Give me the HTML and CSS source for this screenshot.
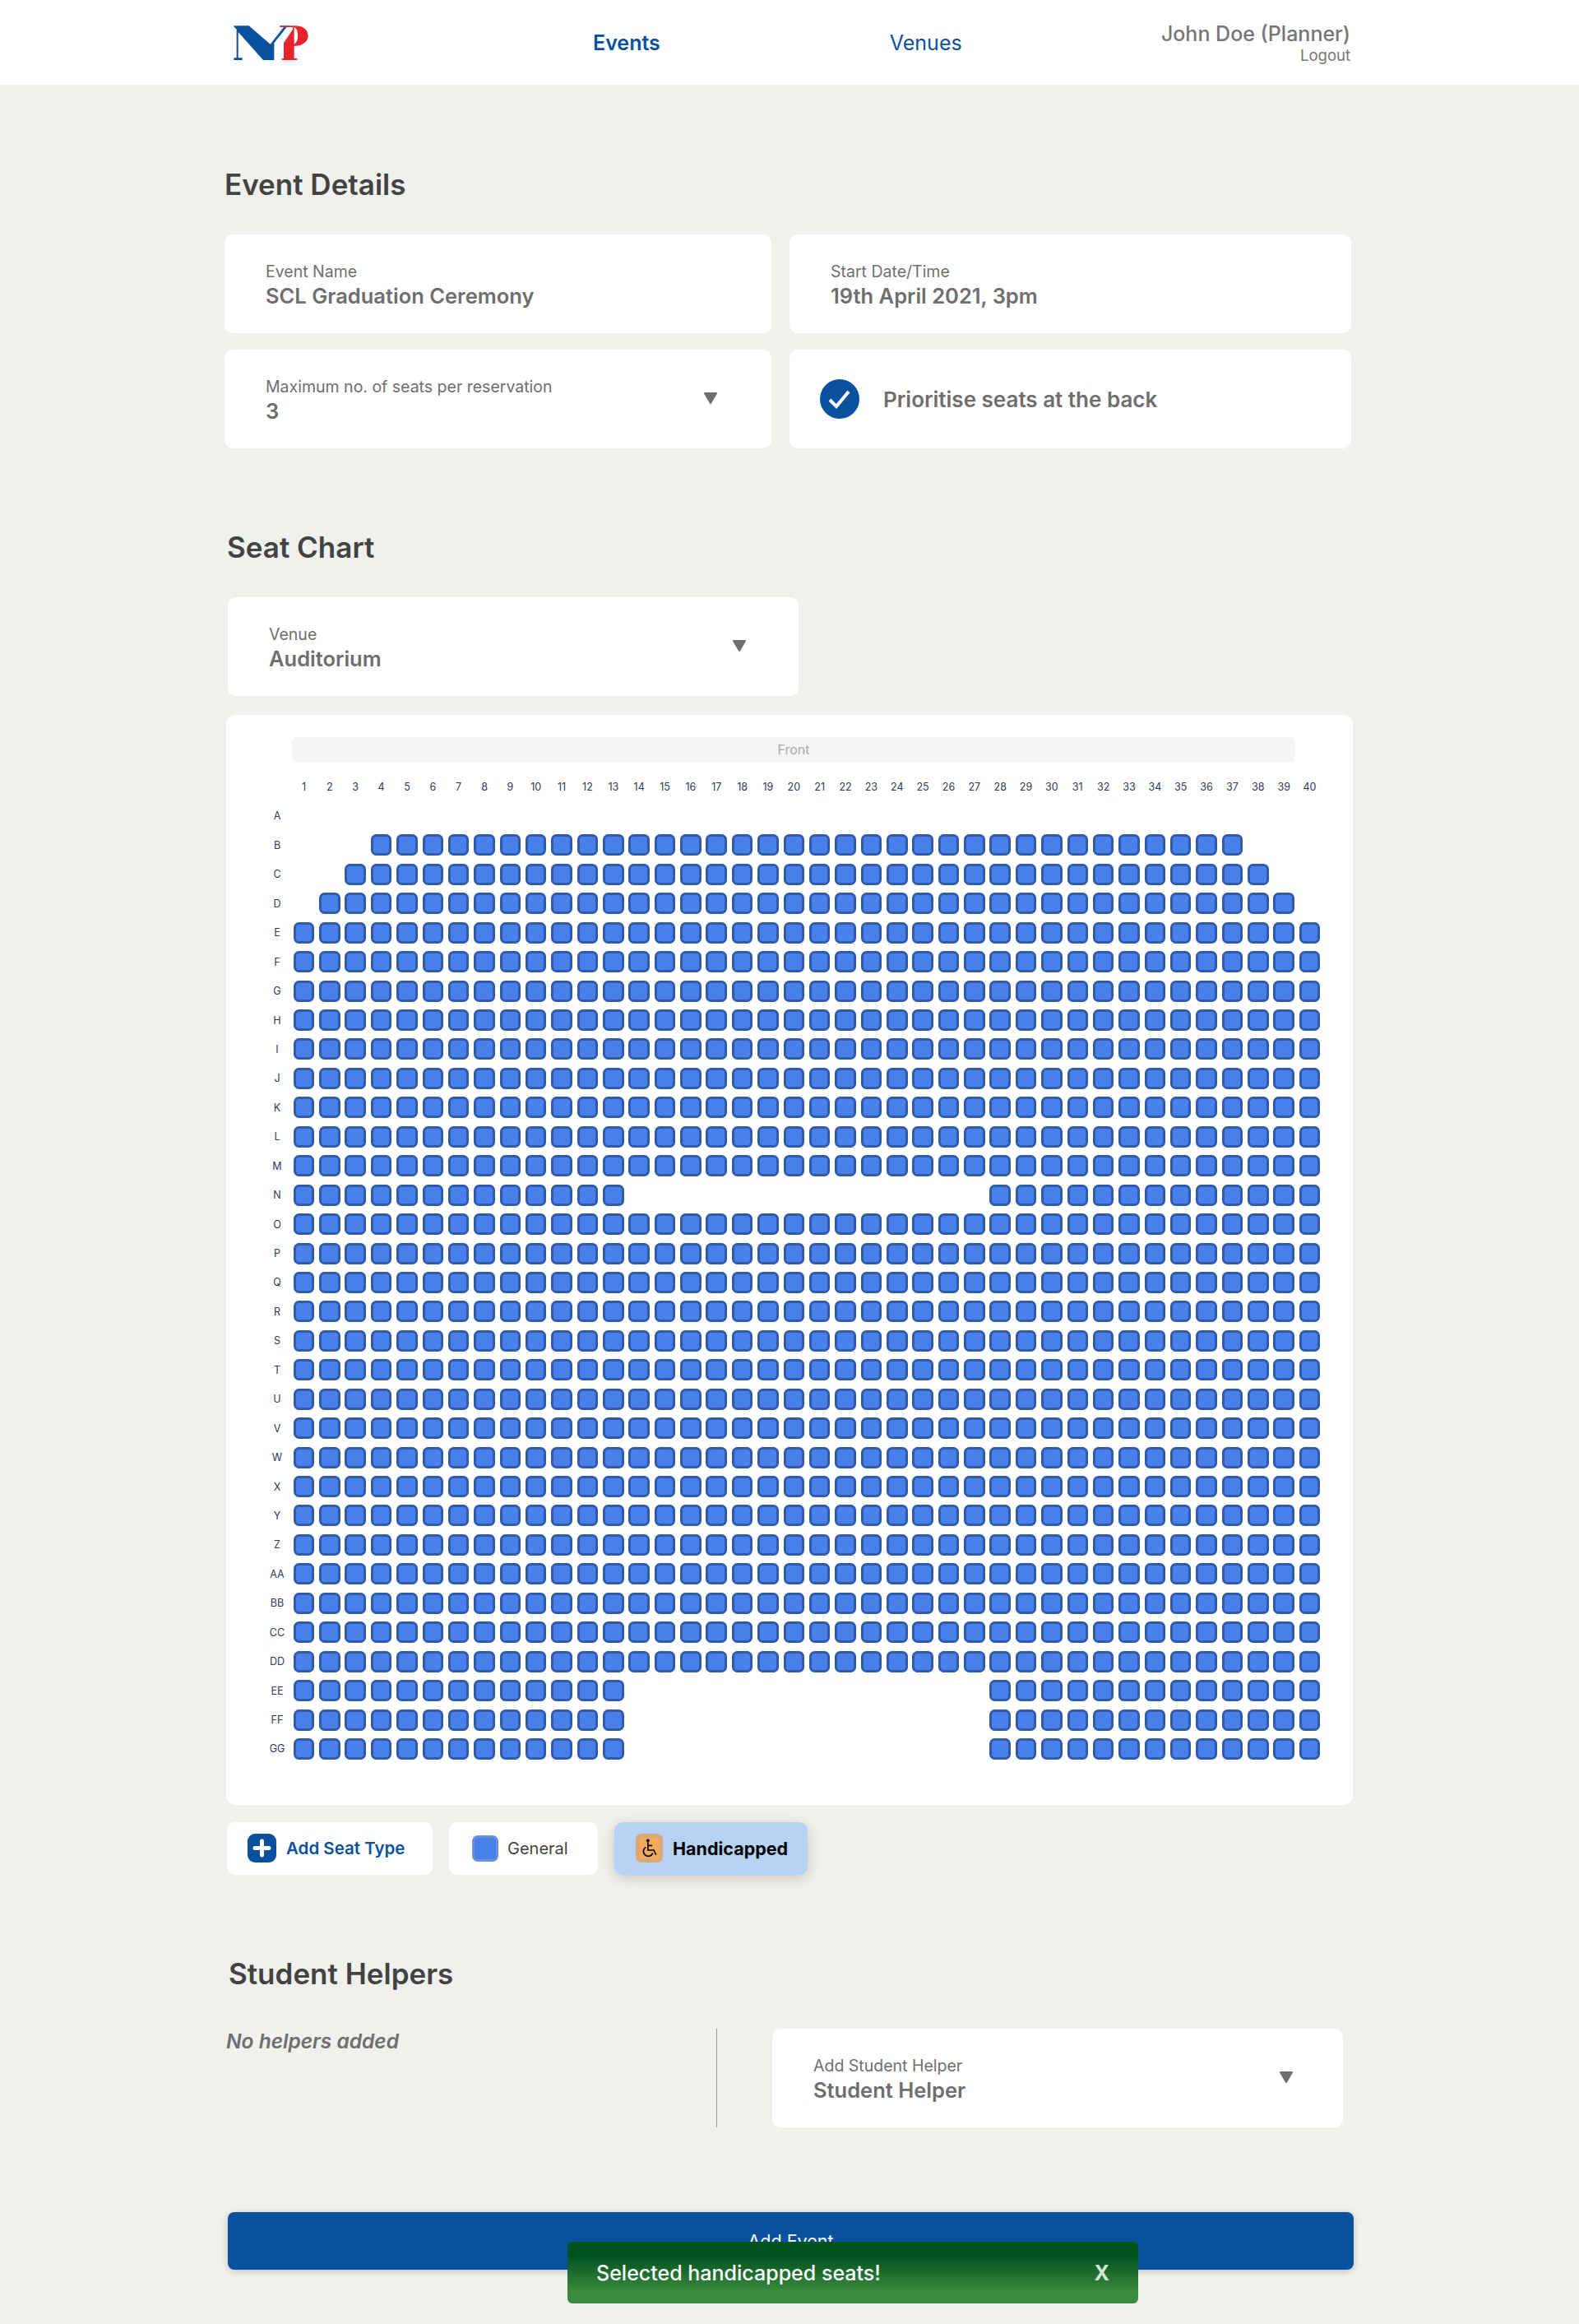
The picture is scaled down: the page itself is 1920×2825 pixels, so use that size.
FILE: index.html
```html
<!DOCTYPE html>
<html lang="en">
<head>
  <meta charset="UTF-8" />
  <meta name="viewport" content="width=device-width, initial-scale=1" />
  <title>Add Event</title>
  <link rel="stylesheet" href="styles.css">
</head>
<body>

<header class="topbar">
  <svg class="logo" viewBox="0 0 324 174" aria-label="NYP">
    <path fill="#09509e" d="M25 25H80L158 92L207 30H193V25H228V30H218L172 88V150H132L41 48V142H56V150H25V142H35V38L25 28Z" />
    <path fill="#e8232b" fill-rule="evenodd" d="M195 25H250C280 25 296 42 296 62C296 84 272 100 245 98V144H256V150H200V144H207V88L240 38V30H195ZM245 30C262 34 264 84 245 92Z" />
  </svg>
  <a class="nav-link events">Events</a>
  <a class="nav-link venues">Venues</a>
  <div class="user">
    <div class="user-name">John Doe (Planner)</div>
    <div class="user-logout">Logout</div>
  </div>
</header>

<main>
  <section class="details">
    <h2>Event Details</h2>
    <div class="details-grid">
      <div class="field">
        <div class="field-label">Event Name</div>
        <div class="field-value">SCL Graduation Ceremony</div>
      </div>
      <div class="field">
        <div class="field-label">Start Date/Time</div>
        <div class="field-value">19th April 2021, 3pm</div>
      </div>
      <div class="field select select-seats">
        <div>
          <div class="field-label">Maximum no. of seats per reservation</div>
          <div class="field-value">3</div>
        </div>
        <svg class="arrow" viewBox="0 0 18 16"><path d="M2 2H16L9 14Z" /></svg>
      </div>
      <div class="field check-field">
        <svg class="check" viewBox="0 0 48 48">
          <circle cx="24" cy="24" r="24" fill="#09509e" />
          <path d="M12 25L20 33L35 15" fill="none" stroke="#fff" stroke-width="4" />
        </svg>
        <span class="check-text">Prioritise seats at the back</span>
      </div>
    </div>
  </section>

  <section class="seat-chart">
    <h2>Seat Chart</h2>
    <div class="field select venue">
      <div>
        <div class="field-label">Venue</div>
        <div class="field-value">Auditorium</div>
      </div>
      <svg class="arrow" viewBox="0 0 18 16"><path d="M2 2H16L9 14Z" /></svg>
    </div>

    <div class="chart">
      <div class="front">Front</div>
      <div class="seat-grid" id="seatGrid"></div>
    </div>

    <div class="seat-types">
      <div class="chip chip-add">
        <svg class="plus" viewBox="0 0 35 35">
          <rect width="35" height="35" rx="9" fill="#09509e" />
          <path d="M17.5 9V26M9 17.5H26" stroke="#fff" stroke-width="5" stroke-linecap="round" />
        </svg>
        <span>Add Seat Type</span>
      </div>
      <div class="chip chip-general">
        <span class="swatch swatch-general"></span>
        <span>General</span>
      </div>
      <div class="chip chip-active">
        <span class="swatch swatch-handicapped">
          <svg viewBox="0 0 70 75">
            <circle cx="30" cy="10" r="6" fill="#000" />
            <path d="M30 16V45H52L60 62M30 28H46M22 34A18 18 0 1 0 48 56" fill="none" stroke="#000" stroke-width="5" />
          </svg>
        </span>
        <span>Handicapped</span>
      </div>
    </div>
  </section>

  <section class="helpers">
    <h2>Student Helpers</h2>
    <div class="helpers-row">
      <div class="helpers-list">No helpers added</div>
      <div class="field select helper-select">
        <div>
          <div class="field-label">Add Student Helper</div>
          <div class="field-value">Student Helper</div>
        </div>
        <svg class="arrow" viewBox="0 0 18 16"><path d="M2 2H16L9 14Z" /></svg>
      </div>
    </div>
  </section>

  <button class="add-event" type="button">Add Event</button>
</main>

<div class="toast">
  <span>Selected handicapped seats!</span>
  <span class="toast-close">X</span>
</div>

<script>
  // Build the auditorium seat chart
  const rows = 'A B C D E F G H I J K L M N O P Q R S T U V W X Y Z AA BB CC DD EE FF GG'.split(' ');
  const seatGrid = document.getElementById('seatGrid');

  function addCell(className, text) {
    const cell = document.createElement('div');
    cell.className = className;
    if (text) cell.textContent = text;
    seatGrid.appendChild(cell);
  }

  function hasSeat(row, col) {
    if (row === 'A') return false;
    if (row === 'B') return col >= 4 && col <= 37;
    if (row === 'C') return col >= 3 && col <= 38;
    if (row === 'D') return col >= 2 && col <= 39;
    if (['N', 'EE', 'FF', 'GG'].includes(row)) return col <= 13 || col >= 28;
    return true;
  }

  addCell('grid-label');
  for (let col = 1; col <= 40; col++) addCell('grid-label', String(col));

  rows.forEach((row) => {
    addCell('grid-label row-label', row);
    for (let col = 1; col <= 40; col++) {
      addCell(hasSeat(row, col) ? 'seat' : 'seat-empty');
    }
  });
</script>

</body>
</html>
```

FILE: styles.css
```css
:root {
  --blue: #09509e;
  --page-bg: #f0f0ec;
  --heading: #424242;
  --muted: #6e6e6e;
}

* {
  box-sizing: border-box;
}
body {
  margin: 0;
  height: 2825px;
  overflow: hidden;
  background-color: var(--page-bg);
  font-family: Inter, 'Noto Sans', sans-serif;
  color: var(--muted);
}

/* Top bar */
.topbar {
  display: flex;
  align-items: center;
  height: 103px;
  padding: 0 278px 0 276px;
  background-color: #fff;
}
.logo {
  width: 108px;
  height: 58px;
  flex: none;
}
.nav-link {
  font-size: 25px;
  color: var(--blue);
}
.events {
  margin-left: 337px;
  font-weight: 600;
}
.venues {
  margin-left: 279px;
}
.user {
  margin-left: auto;
  text-align: right;
}
.user-name {
  font-size: 25px;
  font-weight: 500;
  line-height: 30px;
  color: #757575;
}
.user-logout {
  font-size: 18.5px;
  line-height: 22px;
  color: #757575;
}

main {
  padding-top: 101px;
}
section {
  margin-bottom: 100px;
}
h2 {
  margin: 0 0 41px;
  font-size: 35px;
  font-weight: 600;
  line-height: 40px;
  color: var(--heading);
}

/* Form fields */
.field {
  height: 120px;
  padding: 0 50px;
  border-radius: 10px;
  background-color: #fff;
  display: flex;
  flex-direction: column;
  justify-content: center;
}
.field-label {
  font-size: 19.5px;
  line-height: 26px;
  margin-top: 3px;
  margin-bottom: 1px;
}
.field-value {
  font-size: 25.5px;
  font-weight: 600;
  line-height: 32px;
}
.select {
  flex-direction: row;
  align-items: center;
  justify-content: space-between;
}
.arrow {
  width: 18px;
  height: 16px;
  margin-bottom: 2px;
  fill: var(--muted);
  stroke: var(--muted);
  stroke-width: 2;
  stroke-linejoin: round;
}

.details {
  margin-left: 273px;
}
.details-grid {
  display: grid;
  grid-template-columns: 665px 683px;
  gap: 20px 22px;
}
.select-seats {
  padding-right: 65px;
}
.check-field {
  flex-direction: row;
  align-items: center;
  justify-content: flex-start;
  padding: 0 0 0 37px;
}
.check {
  width: 48px;
  height: 48px;
  flex: none;
}
.check-text {
  margin-left: 29px;
  font-size: 26px;
  font-weight: 600;
}

/* Seat chart */
.seat-chart {
  margin-left: 276px;
}
.venue {
  width: 694px;
  margin-left: 1px;
  padding-right: 63px;
}
.chart {
  width: 1370px;
  margin-top: 23px;
  margin-left: -1px;
  padding: 27px 0 50px 50px;
  border-radius: 12px;
  background-color: #fff;
}
.front {
  width: 1220px;
  height: 31px;
  margin-left: 30px;
  border-radius: 6px;
  background-color: #f5f5f5;
  color: #aaa;
  font-size: 16px;
  line-height: 31px;
  text-align: center;
}
.seat-grid {
  display: grid;
  grid-template-columns: 28.82px repeat(40, 31.36px);
  grid-auto-rows: 35.45px;
  margin-top: 11.8px;
}
.grid-label {
  display: flex;
  align-items: center;
  justify-content: center;
  font-size: 12.5px;
  font-weight: 400;
  color: #2b3a5c;
}
.row-label {
  padding-right: 4.82px;
}
.seat {
  width: 25.5px;
  height: 26px;
  margin: auto;
  border: 3.5px solid #2f5ba8;
  border-radius: 6.5px;
  background-color: #4a80ea;
}

/* Seat type chips */
.seat-types {
  display: flex;
  gap: 20px;
  margin-top: 21px;
}
.chip {
  display: flex;
  align-items: center;
  height: 64px;
  border-radius: 10px;
  background-color: #fff;
  font-size: 20px;
  color: #424242;
}
.chip-add {
  width: 250px;
  padding-left: 25px;
  gap: 12px;
  font-size: 20.5px;
  font-weight: 600;
  color: var(--blue);
}
.plus {
  width: 35px;
  height: 35px;
}
.chip-general {
  width: 181px;
  padding-left: 28px;
  gap: 11px;
}
.chip-active {
  width: 235px;
  padding-left: 26px;
  gap: 12px;
  background-color: #b6d3f3;
  box-shadow: 0 4px 16px rgba(0, 0, 0, 0.18);
  font-size: 21.5px;
  font-weight: 700;
  color: #000;
}
.swatch {
  display: block;
  border-radius: 7px;
}
.swatch-general {
  width: 32px;
  height: 32px;
  border: 3px solid #6b8fd8;
  background-color: #4a80ea;
}
.swatch-handicapped {
  width: 33px;
  height: 35px;
  background-color: #f5a95a;
  border: 5px solid #dba872;
}
.swatch-handicapped svg {
  display: block;
  width: 100%;
  height: 100%;
}

/* Student helpers */
.helpers {
  margin-left: 278px;
  margin-bottom: 103px;
}
.helpers h2 {
  margin-bottom: 47px;
}
.helpers-row {
  display: flex;
}
.helpers-list {
  width: 597px;
  height: 120px;
  margin-left: -3px;
  border-right: 1px solid #9a9a9a;
  font-size: 24.5px;
  font-style: italic;
  font-weight: 600;
  line-height: 30px;
}
.helper-select {
  width: 694px;
  margin-left: 67px;
  padding-right: 60px;
}

.add-event {
  display: block;
  width: 1369px;
  height: 70px;
  margin-left: 277px;
  border: none;
  border-radius: 8px;
  background-color: var(--blue);
  box-shadow: 0 2px 8px rgba(0, 0, 0, 0.2);
  color: #fff;
  font-family: inherit;
  font-size: 21.5px;
}

/* Toast over the button */
.toast {
  position: fixed;
  left: 690px;
  bottom: 25px;
  width: 694px;
  height: 75px;
  padding: 0 35px;
  border-radius: 6px;
  display: flex;
  align-items: center;
  justify-content: space-between;
  background: linear-gradient(#03531f 25%, #3a8a40 80%);
  color: #fff;
  font-size: 25px;
  font-weight: 500;
}
.toast-close {
  font-weight: 700;
  color: #d5e3d6;
}
```
